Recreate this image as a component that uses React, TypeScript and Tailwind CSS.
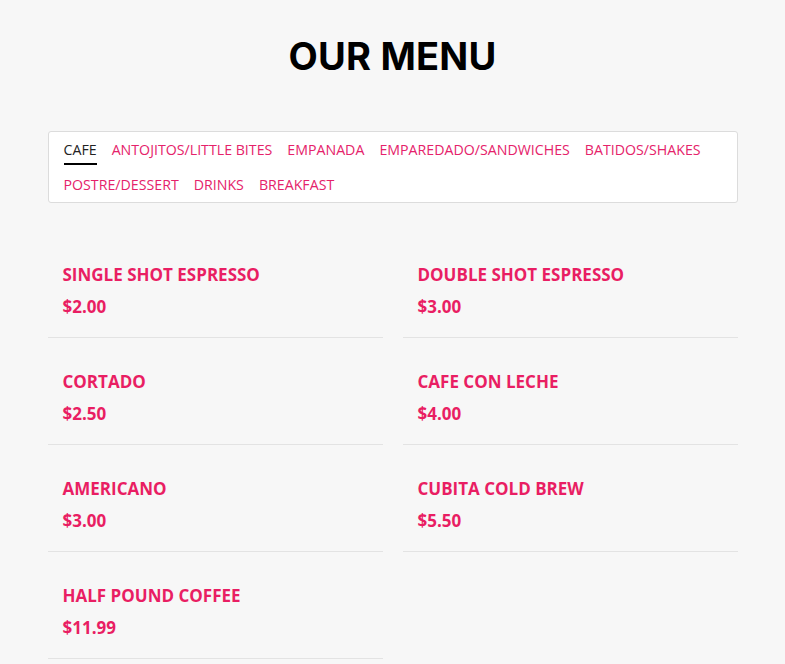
import { useState } from 'react'

const tabs = [
  'CAFE',
  'ANTOJITOS/LITTLE BITES',
  'EMPANADA',
  'EMPAREDADO/SANDWICHES',
  'BATIDOS/SHAKES',
  'POSTRE/DESSERT',
  'DRINKS',
  'BREAKFAST',
]

const items = [
  { name: 'SINGLE SHOT ESPRESSO', price: '$2.00' },
  { name: 'DOUBLE SHOT ESPRESSO', price: '$3.00' },
  { name: 'CORTADO', price: '$2.50' },
  { name: 'CAFE CON LECHE', price: '$4.00' },
  { name: 'AMERICANO', price: '$3.00' },
  { name: 'CUBITA COLD BREW', price: '$5.50' },
  { name: 'HALF POUND COFFEE', price: '$11.99' },
]

export default function App() {
  const [active, setActive] = useState('CAFE')

  return (
    <div className="min-h-screen bg-[#f7f7f7] font-['Open_Sans',sans-serif]">
      <div className="mx-auto w-[690px] pt-[34px] pb-10">
        <h1 className="text-center font-['Inter',sans-serif] text-[38px] font-bold leading-[44px] tracking-[0.2px] text-black">
          OUR MENU
        </h1>

        <div className="mt-[53px] flex flex-wrap gap-x-[15px] rounded-[3px] border border-[#dcdcdc] bg-white px-[15px]">
          {tabs.map((t) => (
            <button
              key={t}
              onClick={() => setActive(t)}
              className={
                'relative h-[35px] text-[14.2px] leading-[35px] ' +
                (active === t ? 'text-[#222]' : 'text-[#e5226a]')
              }
            >
              {t}
              {active === t && (
                <span className="absolute left-0 right-0 top-[31px] h-[2px] bg-black" />
              )}
            </button>
          ))}
        </div>

        <div className="mt-[28px] grid grid-cols-2 gap-x-5">
          {items.map((it) => (
            <div
              key={it.name}
              className="border-b border-[#e3e3e3] px-[15px] pt-[31px] pb-[17px]"
            >
              <div className="text-[17px] font-bold leading-[26px] text-[#e91e63]">
                {it.name}
              </div>
              <div className="mt-[6px] text-[17px] font-bold leading-[26px] text-[#e91e63]">
                {it.price}
              </div>
            </div>
          ))}
        </div>
      </div>
    </div>
  )
}
